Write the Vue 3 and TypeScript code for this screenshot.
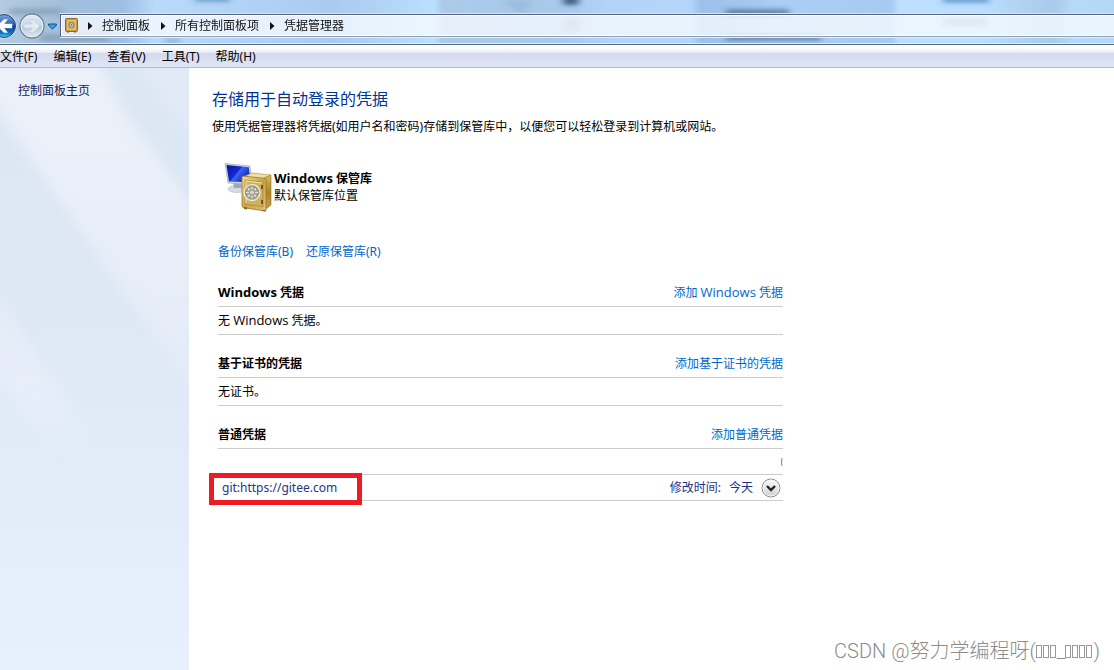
<script setup lang="ts">
interface Section {
  title: string
  latin: string
  add: [string, string, string]
  empty: [string, string, string]
}

const crumbs: string[] = ['控制面板', '所有控制面板项', '凭据管理器']
const menus: string[] = ['文件(F)', '编辑(E)', '查看(V)', '工具(T)', '帮助(H)']
const sections: Section[] = [
  { latin: 'Windows', title: '凭据', add: ['添加', 'Windows', '凭据'], empty: ['无', 'Windows', '凭据。'] },
  { latin: '', title: '基于证书的凭据', add: ['添加基于证书的凭据', '', ''], empty: ['无证书。', '', ''] },
]
</script>

<template>
  <div class="window">
    <header class="glass">
      <svg class="aero" viewBox="0 0 1114 45" preserveAspectRatio="none" aria-hidden="true">
        <defs>
          <linearGradient id="sky" x1="0" x2="1" y1="0" y2="0">
            <stop offset="0" stop-color="#b4cbe2" />
            <stop offset=".06" stop-color="#a2bedb" />
            <stop offset=".11" stop-color="#9dbfe2" />
            <stop offset=".14" stop-color="#b8dafb" />
            <stop offset=".3" stop-color="#a9cbee" />
            <stop offset=".39" stop-color="#bbdfff" />
            <stop offset=".397" stop-color="#adcae8" />
            <stop offset=".5" stop-color="#a7c9eb" />
            <stop offset=".55" stop-color="#b1d4f7" />
            <stop offset=".62" stop-color="#b2d5f9" />
            <stop offset=".63" stop-color="#9cc0e8" />
            <stop offset=".7" stop-color="#aacef5" />
            <stop offset=".8" stop-color="#a7caf1" />
            <stop offset=".807" stop-color="#bcdeff" />
            <stop offset=".88" stop-color="#bcdeff" />
            <stop offset=".945" stop-color="#a8cbea" />
            <stop offset=".965" stop-color="#b7dafa" />
            <stop offset="1" stop-color="#b3d7f7" />
          </linearGradient>
          <filter id="soft" x="-20%" y="-100%" width="140%" height="300%"><feGaussianBlur stdDeviation="3" /></filter>
        </defs>
        <rect width="1114" height="45" fill="url(#sky)" />
        <g filter="url(#soft)">
          <path d="M195 -3h35v4h-35z" fill="#4f86bb" />
          <path d="M10 9h52v6H10zM40 36h68v7H40z" fill="#7d93ac" opacity=".7" />
          <path d="M165 41h15v4h-15z" fill="#63809c" opacity=".6" />
          <path d="M500 0h34l-12 16z" fill="#8fb2d5" opacity=".5" />
          <ellipse cx="571" cy="1" rx="9" ry="4" fill="#345474" />
          <path d="M564 19h15v14h-15z" fill="#91a8c2" />
          <path d="M726 10h63v6h-63zM726 37h95v5h-95z" fill="#466282" opacity=".8" />
          <path d="M943 -3h46v5h-46z" fill="#4b8bc2" />
          <path d="M943 19h44v8h-44z" fill="#88aacb" />
        </g>
      </svg>

      <nav class="history" aria-label="导航">
        <button class="back" type="button" aria-label="后退">
          <svg width="18" height="28" viewBox="0 0 18 28">
            <defs>
              <linearGradient id="blue" x1="0" y1="0" x2="0" y2="1">
                <stop offset="0" stop-color="#7fa6d8" />
                <stop offset=".45" stop-color="#285eb1" />
                <stop offset=".52" stop-color="#09408f" />
                <stop offset=".8" stop-color="#126fc5" />
                <stop offset="1" stop-color="#3fd7fc" />
              </linearGradient>
            </defs>
            <circle cx="4" cy="14" r="12.5" fill="#dce9f5" />
            <circle cx="4" cy="14" r="11.5" fill="url(#blue)" stroke="#24446f" />
            <path d="M-3 14l7-6.500h3.500L4 12h8v4H4l3.500 4.500H4z" fill="#fff" stroke="#e9f2ff" stroke-width=".5" />
          </svg>
        </button>
        <button class="forward" type="button" aria-label="前进">
          <svg width="28" height="28" viewBox="0 0 28 28">
            <defs>
              <linearGradient id="pale" x1="0" y1="0" x2="0" y2="1">
                <stop offset="0" stop-color="#e0eaf3" />
                <stop offset=".48" stop-color="#c9d8e6" />
                <stop offset=".52" stop-color="#b7c9da" />
                <stop offset="1" stop-color="#dceaf6" />
              </linearGradient>
            </defs>
            <circle cx="14" cy="14" r="12" fill="url(#pale)" stroke="#728398" stroke-width="1.300" />
            <circle cx="14" cy="14" r="10.800" fill="none" stroke="#e9f2f9" />
            <path d="M22 14l-7 6.500h-4L14.500 16H6v-4h8.500L11 7.500h4z" fill="#e3ebf3" stroke="#bccddd" stroke-width=".6" />
          </svg>
        </button>
        <button class="recent" type="button" aria-label="最近浏览的页面">
          <svg width="9" height="7" viewBox="0 0 9 7"><path d="M.6 1h7.800v1.400L4.500 6 .6 2.400z" fill="#37a0e6" stroke="#174c83" /></svg>
        </button>
      </nav>

      <nav class="address" aria-label="地址">
        <svg class="safe-mini" width="13" height="15" viewBox="0 0 13 15" aria-hidden="true">
          <rect x=".5" y=".5" width="12" height="13" rx="1" fill="#c99d3f" stroke="#8f6b22" />
          <rect x="2.500" y="2.500" width="8" height="9" fill="#d8b463" stroke="#e0c078" />
          <circle cx="6.500" cy="7" r="2.500" fill="#d7d4c3" stroke="#7c6f4e" />
          <circle cx="6.500" cy="7" r=".8" fill="#635a45" />
          <path d="M2 14h2M9 14h2" stroke="#81601d" />
        </svg>
        <template v-for="crumb in crumbs" :key="crumb">
          <svg class="arrow" width="5" height="8" viewBox="0 0 5 8" aria-hidden="true"><path d="M0 0l4.500 4L0 8z" fill="#111" /></svg>
          <a class="crumb" href="#">{{ crumb }}</a>
        </template>
      </nav>
    </header>

    <nav class="menubar" aria-label="菜单">
      <button v-for="menu in menus" :key="menu" type="button">{{ menu }}</button>
    </nav>

    <div class="body">
      <aside class="sidebar">
        <svg class="rays" viewBox="0 0 189 602" preserveAspectRatio="none" aria-hidden="true">
          <defs>
            <linearGradient id="side" x1="0" y1="0" x2="0" y2="1">
              <stop offset="0" stop-color="#dce7f4" />
              <stop offset=".4" stop-color="#dee8f5" />
              <stop offset="1" stop-color="#e6f1fd" />
            </linearGradient>
            <linearGradient id="ray" x1="0" y1="0" x2="0" y2="1">
              <stop offset="0" stop-color="#ecf0f9" />
              <stop offset=".35" stop-color="#eaf0f9" />
              <stop offset="1" stop-color="#e3ebf8" />
            </linearGradient>
            <linearGradient id="glow" x1="0" y1="0" x2="0" y2="1">
              <stop offset="0" stop-color="#e7eefa" stop-opacity=".5" />
              <stop offset=".55" stop-color="#e7eefa" />
              <stop offset="1" stop-color="#e4effb" stop-opacity=".3" />
            </linearGradient>
            <filter id="edge" x="-10%" y="-10%" width="120%" height="120%"><feGaussianBlur stdDeviation="6" /></filter>
          </defs>
          <rect width="189" height="602" fill="url(#side)" />
          <g filter="url(#edge)">
            <path d="M-20 -20H92L125 45 200 150V330L118 215 0 45-20 10z" fill="url(#ray)" />
            <path d="M132 -10h70v95z" fill="#e1eaf6" />
            <path d="M-10 215L90 370q-12 40-50 1L-10 300z" fill="url(#glow)" />
          </g>
        </svg>
        <a href="#">控制面板主页</a>
      </aside>

      <main>
        <h1>存储用于自动登录的凭据</h1>
        <p class="intro">使用凭据管理器将凭据(如用户名和密码)存储到保管库中，以便您可以轻松登录到计算机或网站。</p>

        <div class="vault">
          <svg width="50" height="52" viewBox="0 0 50 52" aria-hidden="true">
            <defs>
              <linearGradient id="screen" x1="0" y1="0" x2="1" y2=".6">
                <stop offset="0" stop-color="#0714a4" />
                <stop offset=".5" stop-color="#1726d0" />
                <stop offset=".56" stop-color="#3e64ec" />
                <stop offset="1" stop-color="#1021b8" />
              </linearGradient>
              <linearGradient id="gold" x1="0" y1="0" x2="1" y2="1">
                <stop offset="0" stop-color="#efdc99" />
                <stop offset=".5" stop-color="#c9a548" />
                <stop offset="1" stop-color="#dfc579" />
              </linearGradient>
              <linearGradient id="goldSide" x1="0" y1="0" x2="0" y2="1">
                <stop offset="0" stop-color="#d6b860" />
                <stop offset=".5" stop-color="#ad8427" />
                <stop offset="1" stop-color="#c7a148" />
              </linearGradient>
            </defs>
            <ellipse cx="14" cy="29" rx="9" ry="3.500" fill="#d6dde2" stroke="#a7b0b8" stroke-width=".5" />
            <path d="M10 22h8l1 6h-8z" fill="#9eabb6" />
            <path d="M2 3.500L27 6l2 18.500L5 23z" fill="#cbd5dd" stroke="#9faab4" stroke-width=".7" />
            <path d="M3.500 5l22.300 2.200 1.500 15L6 21.500z" fill="url(#screen)" />
            <path d="M21 48l21 4 5-5V21H21z" fill="#8f958f" opacity=".25" />
            <path d="M20 17l9-4 19 2-5 4z" fill="#f0dfa6" stroke="#ae8c3c" stroke-width=".6" />
            <path d="M41 18l7-3v30l-7 5z" fill="url(#goldSide)" stroke="#947120" stroke-width=".6" />
            <path d="M19 17.500q0-1.500 2-1.300l20 2q2 .3 2 2V49q0 2-2 1.700l-20-3q-2-.3-2-2z" fill="url(#gold)" stroke="#99782c" stroke-width=".8" />
            <path d="M22 20l18 2v25l-18-3z" fill="#cfb15d" stroke="#a78535" stroke-width=".7" />
            <path d="M23 43V21l16 2" fill="none" stroke="#f5e5ae" />
            <circle cx="29" cy="32.500" r="8" fill="#b2ad94" stroke="#efeee2" stroke-width="1.200" />
            <circle cx="29" cy="32.500" r="6" fill="none" stroke="#8d8b7b" />
            <path d="M23 32.500h12M29 26.500v12M25 28.500l8 8M33 28.500l-8 8" stroke="#e7e7dc" stroke-width="1.200" />
            <circle cx="29" cy="32.500" r="2.700" fill="#d7d5c9" stroke="#777362" stroke-width=".8" />
            <path d="M39 25v4M39 40v4" stroke="#755719" stroke-width="2" />
            <path d="M21 47l3 .5v2l-3-.5zM39 50l4 .5v1l-4-.5z" fill="#8a6518" />
          </svg>
          <div>
            <h2><span class="latin">Windows</span> 保管库</h2>
            <p>默认保管库位置</p>
          </div>
        </div>

        <div class="actions">
          <a href="#">备份保管库(B)</a>
          <a href="#">还原保管库(R)</a>
        </div>

        <section v-for="section in sections" :key="section.title">
          <div class="head">
            <h3><template v-if="section.latin"><span class="latin">{{ section.latin }}</span>&nbsp;</template>{{ section.title }}</h3>
            <a href="#">{{ section.add[0] }}<template v-if="section.add[1]">&nbsp;<span class="latin">{{ section.add[1] }}</span>&nbsp;{{ section.add[2] }}</template></a>
          </div>
          <p class="empty">{{ section.empty[0] }}<template v-if="section.empty[1]">&nbsp;<span class="latin">{{ section.empty[1] }}</span>&nbsp;{{ section.empty[2] }}</template></p>
        </section>

        <section>
          <div class="head">
            <h3>普通凭据</h3>
            <a href="#">添加普通凭据</a>
          </div>
          <div class="entry blank">
            <svg width="3" height="10" viewBox="0 0 3 10" aria-hidden="true"><path d="M2 1Q1 5 2 9" fill="none" stroke="#858585" /></svg>
          </div>
          <div class="entry">
            <a class="target" href="#">git:https://gitee.com</a>
            <span class="modified">修改时间:</span>
            <span class="day">今天</span>
            <button class="expand" type="button" aria-label="展开">
              <svg width="20" height="20" viewBox="0 0 20 20">
                <defs>
                  <linearGradient id="knob" x1="0" y1="0" x2="0" y2="1">
                    <stop offset="0" stop-color="#fff" />
                    <stop offset=".5" stop-color="#e6e6e6" />
                    <stop offset="1" stop-color="#cfcfcf" />
                  </linearGradient>
                </defs>
                <circle cx="10" cy="10" r="9" fill="url(#knob)" stroke="#858585" />
                <circle cx="10" cy="10" r="8" fill="none" stroke="#f5f5f5" />
                <path d="M6 8l4 4 4-4" fill="none" stroke="#222" stroke-width="2.400" />
              </svg>
            </button>
            <span class="marker" aria-hidden="true"></span>
          </div>
        </section>
      </main>
    </div>
    <div class="watermark">CSDN @努力学编程呀(<i v-for="n in 3" :key="n" class="box"></i>_<i v-for="n in 4" :key="n" class="box"></i>)</div>
  </div>
</template>

<style>
body {
  margin: 0;
}
</style>

<style scoped>
.window {
  position: relative;
  display: flex;
  flex-direction: column;
  min-height: 100vh;
  overflow: hidden;
  background: #fff;
  color: #000;
  font: 12px/18px "Noto Sans", "Noto Sans CJK SC", sans-serif;
}
h1, h2, h3, p {
  margin: 0;
}
h2, h3 {
  font-size: 12px;
  font-weight: 700;
}
a {
  color: #0066cc;
  text-decoration: none;
}
button {
  padding: 0;
  border: 0;
  background: none;
  color: inherit;
  font: inherit;
}
svg {
  display: block;
}
.latin {
  font-family: "Open Sans", sans-serif;
  font-size: 13px;
  line-height: 1;
}
.glass {
  position: relative;
  display: flex;
  align-items: flex-start;
  height: 44px;
  border-bottom: 1px solid #566b86;
  box-shadow: inset 0 -1px #dfeefb;
}
.aero {
  position: absolute;
  inset: 0;
  width: 100%;
  height: 43px;
}
.history {
  position: relative;
  display: flex;
  align-items: center;
  width: 60px;
  margin-top: 12px;
}
.forward {
  margin-right: 2px;
}
.address {
  position: relative;
  display: flex;
  flex: 1;
  align-items: center;
  height: 21px;
  margin-top: 14px;
  border: 1px solid #55617a;
  border-right: 0;
  border-bottom-color: #8e9fb4;
  box-shadow: inset 1px 1px #fff, inset 0 -1px #fff, 0 -1px #d5e7f8, 0 1px #e0effd;
  background: rgba(250, 252, 255, .76);
}
.safe-mini {
  margin: 0 6px 0 4px;
}
.arrow {
  margin: 0 9px 0 4px;
}
.crumb {
  margin-right: 7px;
  color: #111;
}
.menubar {
  display: flex;
  gap: 16px;
  height: 22px;
  border-bottom: 1px solid #b1b9cc;
  background: linear-gradient(#fff 0, #fbfcfe 3px, #e5eaf4 8px, #d4daed 8px, #e0e6f6 22px);
}
.menubar button {
  padding-top: 2px;
  white-space: nowrap;
}
.body {
  display: flex;
  flex: 1;
}
.sidebar {
  position: relative;
  flex: 0 0 189px;
}
.rays {
  position: absolute;
  width: 100%;
  height: 100%;
}
.sidebar a {
  position: relative;
  display: block;
  margin: 14px 18px;
  color: #151c55;
}
main {
  flex: 1;
  padding: 18px 23px;
}
h1 {
  color: #003399;
  font-size: 16px;
  font-weight: 400;
  line-height: 26px;
}
.intro {
  margin-top: 6px;
}
.vault {
  display: flex;
  gap: 1px;
  margin: 24px 0 0 11px;
}
.vault > div {
  padding-top: 10px;
}
.vault h2, .vault p {
  line-height: 17px;
}
.actions {
  display: flex;
  gap: 13px;
  margin: 31px 0 17px 6px;
}
section {
  max-width: 565px;
  margin: 0 0 14px 6px;
}
.head {
  display: flex;
  align-items: center;
  justify-content: space-between;
  height: 26px;
  padding-top: 2px;
  border-bottom: 1px solid #ccc;
}
.empty {
  height: 27px;
  border-bottom: 1px solid #ccc;
  line-height: 27px;
}
.entry {
  position: relative;
  display: flex;
  align-items: center;
  height: 25px;
  border-bottom: 1px solid #ccc;
  color: #1d3287;
}
.blank {
  justify-content: flex-end;
}
.target {
  flex: 1;
  padding-left: 4px;
  color: #26348b;
}
.day {
  margin: 0 8px;
}
.expand {
  margin-right: 2px;
}
.marker {
  position: absolute;
  top: -2px;
  left: -9px;
  width: 143px;
  height: 22px;
  border: 5px solid #ed1c24;
  pointer-events: none;
}
.watermark {
  position: absolute;
  right: 14px;
  bottom: 4px;
  color: #8c8c8c;
  font: 300 20px/30px Roboto, "Noto Sans CJK SC", sans-serif;
}
.box {
  display: inline-block;
  width: 4px;
  height: 11px;
  margin-right: 1px;
  border: 1px solid #999;
}
</style>
